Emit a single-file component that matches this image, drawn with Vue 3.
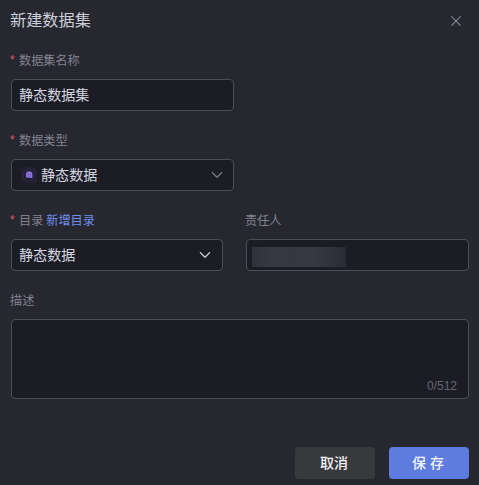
<script setup>
import { ref } from 'vue'

const name = ref('静态数据集')
const dataType = ref('静态数据')
const directory = ref('静态数据')
const description = ref('')
const maxLength = 512
</script>

<template>
  <div class="dialog">
    <header class="head">
      <span class="title">新建数据集</span>
      <svg class="close" viewBox="0 0 10 10"><path d="M0.4 0.4L9.6 9.6M9.6 0.4L0.4 9.6" /></svg>
    </header>

    <main class="form">
      <div class="item">
        <div class="label"><i>*</i><span>数据集名称</span></div>
        <div class="field medium">{{ name }}</div>
      </div>
      <div class="item">
        <div class="label"><i>*</i><span>数据类型</span></div>
        <div class="field medium typed">
          <svg class="type-icon" viewBox="0 0 16 16">
            <rect width="16" height="16" fill="#211f31" />
            <path d="M8 1.3L13.5 4.5V11.5L8 14.7L2.5 11.5V4.5Z" fill="none" stroke="#2d2847" stroke-width="1" />
            <path d="M5 6L6.5 4.6H10L11.4 6.2V11H9L8 10.2L6.5 11L4.8 9.8Z" fill="#8972d5" />
            <path d="M6.5 7.6H9.3V10" fill="none" stroke="#7560c2" stroke-width="0.7" />
          </svg>
          <span>{{ dataType }}</span>
          <svg class="arrow dim" viewBox="0 0 12 8"><path d="M1 1.2L6 6.3L11 1.2" /></svg>
        </div>
      </div>
      <div class="row">
        <div class="item narrow">
          <div class="label"><i>*</i><span>目录</span><a>新增目录</a></div>
          <div class="field">
            <span>{{ directory }}</span>
            <svg class="arrow" viewBox="0 0 12 8"><path d="M1 1.2L6 6.3L11 1.2" /></svg>
          </div>
        </div>
        <div class="item owner">
          <div class="label">责任人</div>
          <div class="field masked"><div class="mask"></div></div>
        </div>
      </div>
      <div class="item">
        <div class="label">描述</div>
        <div class="field area"><span class="count">{{ description.length }}/{{ maxLength }}</span></div>
      </div>
    </main>

    <footer class="foot">
      <button class="btn cancel">取消</button>
      <button class="btn save">保 存</button>
    </footer>
  </div>
</template>

<style>
body {
  background: #272730;
}
</style>

<style scoped>
.dialog {
  box-sizing: border-box;
  width: 479px;
  height: 485px;
  padding: 0 10px 6px 11px;
  display: flex;
  flex-direction: column;
  background: #272730;
  font-family: "Liberation Sans", "Noto Sans CJK SC", sans-serif;
  color: #d5d7e0;
  overflow: hidden;
}
.head {
  height: 41px;
  display: flex;
  align-items: center;
  justify-content: space-between;
  padding-right: 8px;
  margin-left: -1px;
}
.title {
  margin-bottom: 2px;
  font-size: 16.2px;
  line-height: 24px;
  color: #cdcfd8;
}
.close {
  width: 10px;
  height: 10px;
}
.close path {
  fill: none;
  stroke: #858792;
  stroke-width: 1.1;
}
.form {
  padding-top: 9px;
  display: flex;
  flex-direction: column;
  gap: 19px;
}
.label {
  height: 22px;
  margin: 0 0 7px -1px;
  line-height: 22px;
  display: flex;
  font-size: 12.15px;
  color: #81838f;
}
.label i {
  width: 9px;
  font-style: normal;
  line-height: 21px;
  color: #e0585d;
}
.label a {
  margin-left: 3px;
  color: #6f8fee;
}
.row {
  display: flex;
  gap: 23px;
}
.narrow {
  width: 212px;
}
.owner {
  flex: 1;
}
.field {
  box-sizing: border-box;
  height: 32px;
  padding: 0 11px 0 7px;
  display: flex;
  align-items: center;
  border: 1px solid #4d4d57;
  border-radius: 4px;
  background: #1c1c25;
  font-size: 14.1px;
  line-height: 20px;
}
.medium {
  width: 223px;
}
.typed {
  padding-left: 9px;
}
.type-icon {
  width: 16px;
  height: 16px;
  margin-right: 4px;
}
.arrow {
  width: 12px;
  height: 8px;
  margin-left: auto;
}
.typed .arrow {
  margin-right: -1px;
}
.arrow path {
  fill: none;
  stroke: #c3c5ce;
  stroke-width: 1.3;
}
.arrow.dim path {
  stroke: #777984;
}
.masked {
  padding: 3px 0 0 5px;
}
.mask {
  width: 94px;
  height: 20px;
  background: linear-gradient(90deg, #30313a, #373841 22%, #35363f 45%, #383942 65%, #32333c 82%, #292a33);
}
.area {
  height: 80px;
  align-items: flex-end;
  justify-content: flex-end;
  padding: 0 11px 2px 8px;
}
.count {
  font-size: 12px;
  color: #656671;
}
.foot {
  margin-top: auto;
  display: flex;
  justify-content: flex-end;
  gap: 14px;
}
.btn {
  width: 80px;
  height: 32px;
  padding: 0 2px 0 0;
  border: 0;
  border-radius: 4px;
  font: 500 14px/32px "Liberation Sans", "Noto Sans CJK SC", sans-serif;
  color: #f3f4f8;
}
.cancel {
  background: #38393d;
}
.save {
  background: #5e7ce0;
}
</style>
